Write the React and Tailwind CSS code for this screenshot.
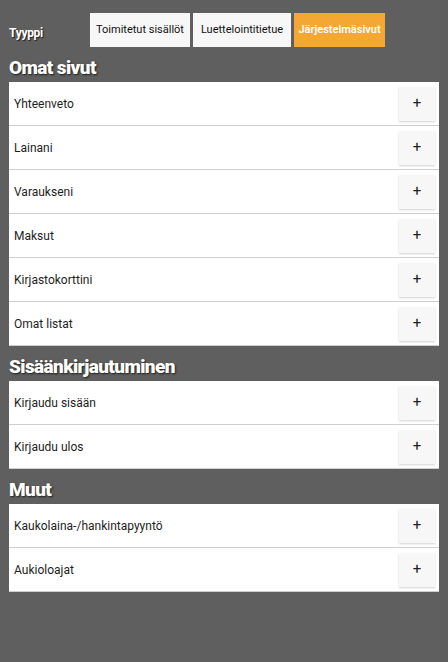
const sections = [
  {
    title: 'Omat sivut',
    items: ['Yhteenveto', 'Lainani', 'Varaukseni', 'Maksut', 'Kirjastokorttini', 'Omat listat'],
  },
  {
    title: 'Sisäänkirjautuminen',
    items: ['Kirjaudu sisään', 'Kirjaudu ulos'],
  },
  {
    title: 'Muut',
    items: ['Kaukolaina-/hankintapyyntö', 'Aukioloajat'],
  },
];

const tabs = [
  { label: 'Toimitetut sisällöt', width: 'w-[100px]' },
  { label: 'Luettelointitietue', width: 'w-[98px]' },
  { label: 'Järjestelmäsivut', width: 'w-[91px]', active: true },
];

function Row({ label }) {
  return (
    <div className="flex h-[44px] items-center justify-between border-b border-[#cfcfcf] bg-white pl-[5px] pr-[4px]">
      <span className="text-[12px] text-[#1e1e1e]">{label}</span>
      <button className="flex h-[34px] w-[36px] items-center justify-center bg-[#f7f7f7] text-[15px] text-[#222] shadow-[0_1px_2px_rgba(0,0,0,0.18)]">
        +
      </button>
    </div>
  );
}

export default function App() {
  return (
    <div
      className="min-h-[662px] bg-[#5f5f5f] px-[9px] pt-[13px]"
      style={{ fontFamily: 'Roboto, "Liberation Sans", sans-serif' }}
    >
      <div className="flex h-[34px] items-center">
        <span className="mt-[6px] w-[81px] text-[12px] font-bold tracking-[-0.3px] text-white [text-shadow:1px_1px_1px_rgba(0,0,0,0.7)]">
          Tyyppi
        </span>
        <div className="flex gap-[3px]">
          {tabs.map((t) => (
            <button
              key={t.label}
              className={`h-[34px] ${t.width} text-[11px] ${
                t.active
                  ? 'bg-[#f5a733] font-semibold text-white'
                  : 'bg-[#f7f7f7] text-[#111]'
              }`}
            >
              {t.label}
            </button>
          ))}
        </div>
      </div>

      {sections.map((s) => (
        <div key={s.title}>
          <div className="flex h-[35px] items-end pb-[2px]">
            <h2 className="text-[19px] leading-[24px] font-black tracking-[-0.6px] text-white [text-shadow:1px_1px_2px_rgba(0,0,0,0.7)]">
              {s.title}
            </h2>
          </div>
          <div>
            {s.items.map((item) => (
              <Row key={item} label={item} />
            ))}
          </div>
        </div>
      ))}
    </div>
  );
}
